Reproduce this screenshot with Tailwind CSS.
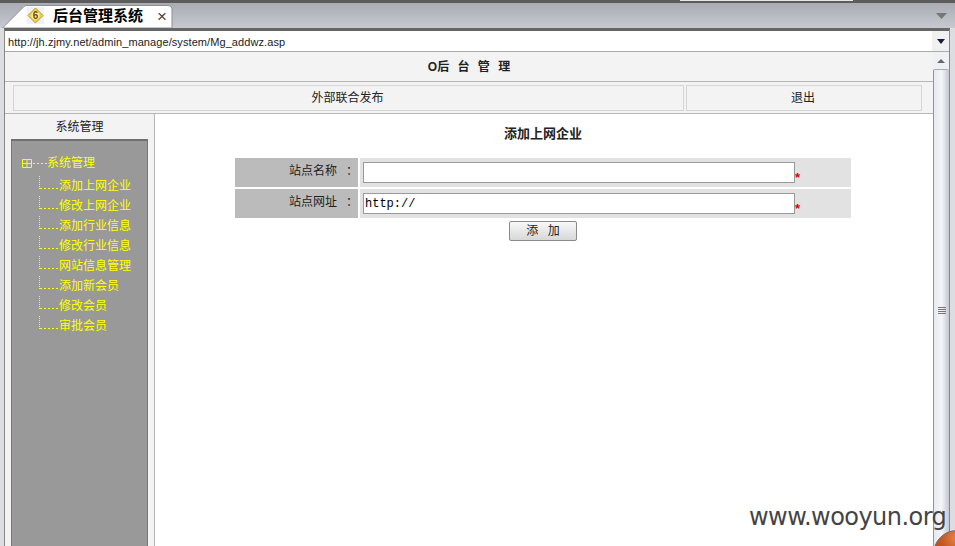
<!DOCTYPE html>
<html lang="en">
<head>
  <meta charset="UTF-8">
  <title>后台管理系统</title>
  <script src="https://cdn.jsdelivr.net/npm/@tailwindcss/browser@4"></script>
</head>
<body class="w-[955px] h-[546px] overflow-hidden relative bg-[#dcdde0] font-['Liberation_Sans','Noto_Sans_CJK_SC',sans-serif] text-[12px] text-[#222]">
  <!-- top strip -->
  <div class="h-[3px] bg-[#5c5c5c] flex">
    <div class="ml-[680px] w-[173px] h-[1px] bg-[#e8e8e8]"></div>
  </div>

  <!-- tab bar -->
  <div class="h-[25px] flex items-end bg-gradient-to-b from-[#a9adb3] to-[#c6cad0] relative">
    <div class="relative ml-[2px] w-[171px] h-[23px]">
      <svg class="absolute inset-0" width="171" height="23" viewBox="0 0 171 23">
        <path d="M0.5 23 L22 1.5 Q23 0.5 25 0.5 L166 0.5 Q170 0.5 170 4 L170 23 Z" fill="#fff" stroke="#8c8f94"/>
      </svg>
      <svg class="absolute left-[25px] top-[2px]" width="17" height="17" viewBox="0 0 17 17">
        <rect x="0" y="0" width="17" height="17" fill="#eef2f8"/>
        <path d="M8.5 1 L16 8.5 L8.5 16 L1 8.5 Z" fill="#f6d335" stroke="#b39a3c" stroke-linejoin="round"/>
        <circle cx="8.5" cy="8.5" r="4" fill="#fdf0a0"/>
        <text x="8.5" y="12" text-anchor="middle" font-size="10" font-weight="700" fill="#6a4a18" font-family="Liberation Sans">6</text>
      </svg>
      <span class="absolute left-[51px] top-[1px] text-[15px] leading-[20px] font-bold text-black whitespace-nowrap">后台管理系统</span>
      <span class="absolute left-[155px] top-[2px] text-[17px] leading-[20px] text-[#444]">×</span>
    </div>
    <svg class="absolute left-[936px] top-[10px]" width="11" height="6" viewBox="0 0 11 6"><path d="M0 0 H11 L5.5 6 Z" fill="#777"/></svg>
  </div>

  <!-- browser frame -->
  <div class="ml-[4px] w-[946px] border-x border-[#888] border-t-[3px] border-t-[#666] h-[518px] flex flex-col">
    <!-- address bar -->
    <div class="h-[21px] shrink-0 bg-white border-b border-[#aaa] flex items-center">
      <span class="pl-[3px] pt-[1px] text-[11px] tracking-[0.08px] text-[#222] flex-1 leading-[20px]">http://jh.zjmy.net/admin_manage/system/Mg_addwz.asp</span>
      <div class="w-[17px] h-full bg-[#f0f0f0] flex items-center justify-center">
        <svg width="8" height="5" viewBox="0 0 8 5"><path d="M0 0 H8 L4 5 Z" fill="#1a1a3a"/></svg>
      </div>
    </div>

    <div class="flex-1 flex min-h-0">
      <!-- page -->
      <div class="w-[928px] flex flex-col bg-white">
        <div class="h-[30px] shrink-0 bg-[#f3f3f3] border-b border-[#b5b5b5] flex items-center justify-center font-bold text-[#222] [word-spacing:5px]">
          <span>O后 台 管 理</span>
        </div>
        <div class="h-[32px] shrink-0 bg-[#f3f3f3] border-b border-[#b5b5b5] flex pl-[8px] pt-[3px] gap-[2px]">
          <div class="w-[671px] h-[26px] border border-[#d5d5d5] flex items-center justify-center pr-[2px] pb-[1px]">外部联合发布</div>
          <div class="w-[236px] h-[26px] border border-[#d5d5d5] flex items-center justify-center pr-[2px] pb-[1px]">退出</div>
        </div>

        <div class="flex-1 flex min-h-0">
          <!-- side menu -->
          <div class="w-[150px] shrink-0 bg-[#f3f3f3] border-r border-[#b5b5b5] px-[6px] flex flex-col">
            <div class="h-[25px] shrink-0 flex items-center justify-center text-[#222]">系统管理</div>
            <div class="flex-1 w-[137px] bg-[#999999] border-t-2 border-t-[#6f6f6f] border-x border-x-[#777] text-[#ffff00] pt-[12px]">
              <div class="h-[20px] flex items-center pl-[10px]">
                <svg width="10" height="9" viewBox="0 0 10 9" class="shrink-0"><path d="M0.5 0.5 H9.5 V8.5 H0.5 Z M0.5 4.5 H9.5 M5 0.5 V8.5" fill="none" stroke="#ffff00"/></svg>
                <span class="w-[14px] h-[1px] ml-[1px] bg-[repeating-linear-gradient(90deg,#ffff00_0_2px,transparent_2px_4px)]"></span>
                <span>系统管理</span>
              </div>
              <div class="mt-[3px]">
                <div class="h-[20px] flex pl-[27px]"><span class="w-[19px] h-[13px] border-l border-dotted border-[#ffff00] bg-[repeating-linear-gradient(90deg,#ffff00_0_2px,transparent_2px_4px)] bg-bottom bg-no-repeat bg-[length:100%_1px]"></span><span class="leading-[20px] ml-[1px]">添加上网企业</span></div>
                <div class="h-[20px] flex pl-[27px]"><span class="w-[19px] h-[13px] border-l border-dotted border-[#ffff00] bg-[repeating-linear-gradient(90deg,#ffff00_0_2px,transparent_2px_4px)] bg-bottom bg-no-repeat bg-[length:100%_1px]"></span><span class="leading-[20px] ml-[1px]">修改上网企业</span></div>
                <div class="h-[20px] flex pl-[27px]"><span class="w-[19px] h-[13px] border-l border-dotted border-[#ffff00] bg-[repeating-linear-gradient(90deg,#ffff00_0_2px,transparent_2px_4px)] bg-bottom bg-no-repeat bg-[length:100%_1px]"></span><span class="leading-[20px] ml-[1px]">添加行业信息</span></div>
                <div class="h-[20px] flex pl-[27px]"><span class="w-[19px] h-[13px] border-l border-dotted border-[#ffff00] bg-[repeating-linear-gradient(90deg,#ffff00_0_2px,transparent_2px_4px)] bg-bottom bg-no-repeat bg-[length:100%_1px]"></span><span class="leading-[20px] ml-[1px]">修改行业信息</span></div>
                <div class="h-[20px] flex pl-[27px]"><span class="w-[19px] h-[13px] border-l border-dotted border-[#ffff00] bg-[repeating-linear-gradient(90deg,#ffff00_0_2px,transparent_2px_4px)] bg-bottom bg-no-repeat bg-[length:100%_1px]"></span><span class="leading-[20px] ml-[1px]">网站信息管理</span></div>
                <div class="h-[20px] flex pl-[27px]"><span class="w-[19px] h-[13px] border-l border-dotted border-[#ffff00] bg-[repeating-linear-gradient(90deg,#ffff00_0_2px,transparent_2px_4px)] bg-bottom bg-no-repeat bg-[length:100%_1px]"></span><span class="leading-[20px] ml-[1px]">添加新会员</span></div>
                <div class="h-[20px] flex pl-[27px]"><span class="w-[19px] h-[13px] border-l border-dotted border-[#ffff00] bg-[repeating-linear-gradient(90deg,#ffff00_0_2px,transparent_2px_4px)] bg-bottom bg-no-repeat bg-[length:100%_1px]"></span><span class="leading-[20px] ml-[1px]">修改会员</span></div>
                <div class="h-[20px] flex pl-[27px]"><span class="w-[19px] h-[13px] border-l border-dotted border-[#ffff00] bg-[repeating-linear-gradient(90deg,#ffff00_0_2px,transparent_2px_4px)] bg-bottom bg-no-repeat bg-[length:100%_1px]"></span><span class="leading-[20px] ml-[1px]">审批会员</span></div>
              </div>
            </div>
          </div>

          <!-- form -->
          <div class="flex-1 pl-[80px] pt-[10px]">
            <div class="w-[616px] text-center text-[13px] font-bold h-[20px] leading-[20px] text-[#222]">添加上网企业</div>
            <div class="w-[616px] mt-[14px] flex flex-col gap-[2px]">
              <div class="h-[29px] flex gap-[2px]">
                <div class="w-[123px] bg-[#bbbbbb] flex items-center justify-end pb-[4px]"><span>站点名称</span><span class="ml-[9px] w-[12px]">：</span></div>
                <div class="flex-1 bg-[#e2e2e2] flex pl-[3px] pt-[4px]">
                  <input type="text" class="w-[432px] h-[21px] bg-white border border-[#999] outline-none">
                  <span class="text-[#dd0000] text-[13px] font-bold leading-[32px]">*</span>
                </div>
              </div>
              <div class="h-[29px] flex gap-[2px]">
                <div class="w-[123px] bg-[#bbbbbb] flex items-center justify-end pb-[4px]"><span>站点网址</span><span class="ml-[9px] w-[12px]">：</span></div>
                <div class="flex-1 bg-[#e2e2e2] flex pl-[3px] pt-[4px]">
                  <input type="text" value="http://" class="w-[432px] h-[21px] bg-white border border-[#999] outline-none pl-[1px] text-[12px] font-['Liberation_Mono',monospace] text-black">
                  <span class="text-[#dd0000] text-[13px] font-bold leading-[32px]">*</span>
                </div>
              </div>
            </div>
            <div class="w-[616px] flex justify-center mt-[3px]">
              <button class="w-[68px] h-[20px] rounded-[2px] border border-[#8a8a8a] bg-gradient-to-b from-[#f8f8f8] to-[#d8d8d8] text-[#222] [word-spacing:6px]">添 加</button>
            </div>
          </div>
        </div>
      </div>

      <!-- scrollbar -->
      <div class="w-[16px] bg-[#eef0f4] flex flex-col">
        <div class="h-[17px] flex items-center justify-center">
          <svg width="8" height="4" viewBox="0 0 8 4"><path d="M4 0 L8 4 H0 Z" fill="#666"/></svg>
        </div>
        <div class="flex-1 border-l border-[#8a94ad] bg-gradient-to-r from-[#e6e9f0] via-[#f4f5f8] to-[#c4c8d2] flex items-center justify-center rounded-t-[2px] border-t border-t-[#aab] pt-[6px]">
          <svg width="8" height="8" viewBox="0 0 8 8"><path d="M0 0.5 H8 M0 2.5 H8 M0 4.5 H8 M0 6.5 H8" stroke="#777"/></svg>
        </div>
      </div>
    </div>
  </div>

  <!-- watermark and corner button sit over the page -->
  <div class="absolute left-[749px] top-[502px] text-[24px] leading-[30px] text-[#444] font-['DejaVu_Sans',sans-serif] tracking-[-0.55px]">www.wooyun.org</div>
  <div class="absolute left-[933px] top-[530px] w-[22px] h-[16px] overflow-hidden">
    <div class="w-[48px] h-[48px] rounded-full bg-[radial-gradient(circle_at_50%_15%,#e8864a_0%,#c4561f_35%,#a8410f_100%)] border border-[#6e6e6e]"></div>
  </div>
</body>
</html>
